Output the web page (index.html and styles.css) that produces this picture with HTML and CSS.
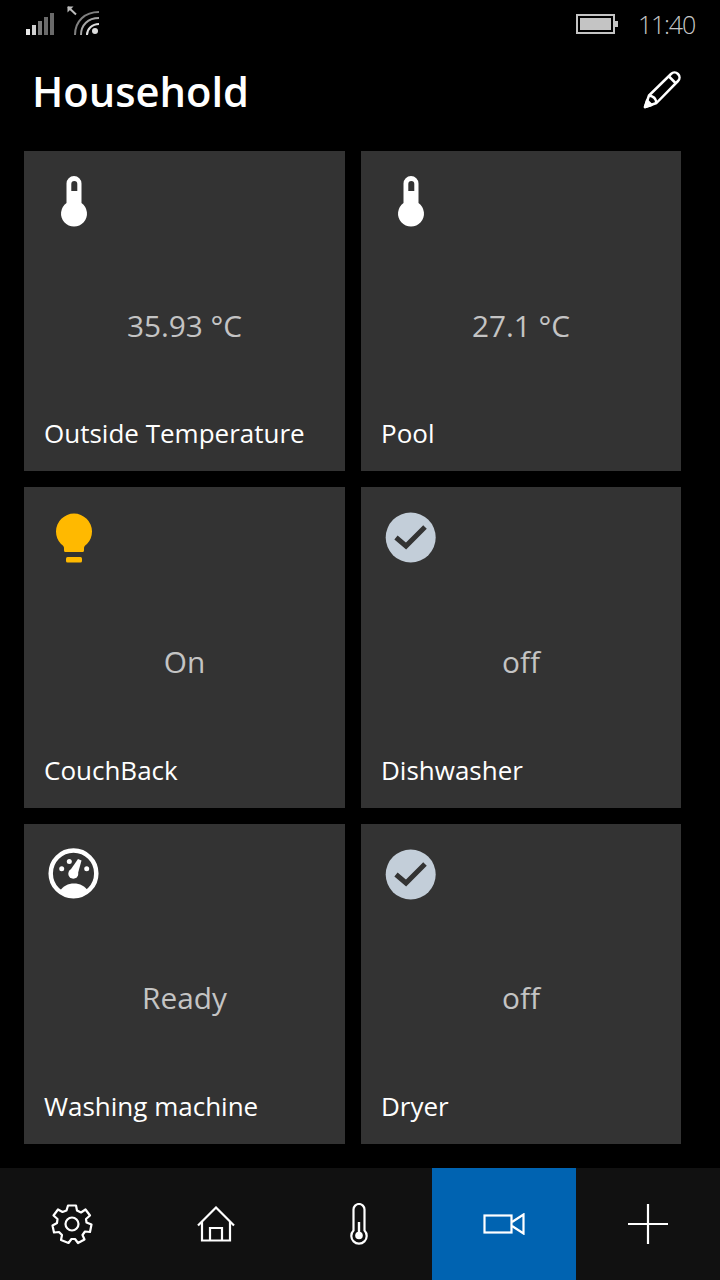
FILE: index.html
```html
<!DOCTYPE html>
<html lang="en">
<head>
    <meta charset="UTF-8">
    <meta name="viewport" content="width=device-width, initial-scale=1.0">
    <title>Household</title>
    <link rel="stylesheet" href="styles.css">
</head>
<body>
    <div class="phone">
        <div class="status-bar">
            <svg class="status-signal" width="30" height="24" viewBox="0 0 30 24">
                <rect x="0" y="17" width="4" height="6" fill="#e8e8e8"/>
                <rect x="6" y="13" width="4" height="10" fill="#d0d0d0"/>
                <rect x="12" y="9" width="4" height="14" fill="#7a7a7a"/>
                <rect x="18" y="5" width="4" height="18" fill="#6a6a6a"/>
                <rect x="24" y="1" width="4" height="22" fill="#6a6a6a"/>
            </svg>
            <svg class="status-wifi" width="36" height="30" viewBox="0 0 36 30" fill="none">
                <path d="M2 1L10 8.500" stroke="#bdbdbd" stroke-width="2"/>
                <path d="M1.500 6.500V.500H7.500Z" fill="#bdbdbd"/>
                <path d="M9 29C9 15 19 6 33 6" stroke="#808080" stroke-width="2"/>
                <path d="M15 29C15 19 22 12 33 12" stroke="#a5a5a5" stroke-width="2"/>
                <path d="M21 29C21 23 26 18 33 18" stroke="#ddd" stroke-width="2"/>
                <circle cx="29" cy="25" r="3" fill="#ddd"/>
            </svg>
            <span class="status-spacer"></span>
            <svg class="status-battery" width="44" height="20" viewBox="0 0 44 20">
                <rect x="1" y="1" width="37" height="18" fill="none" stroke="#c4c4c4" stroke-width="2"/>
                <rect x="4" y="4" width="31" height="12" fill="#c4c4c4"/>
                <rect x="39" y="7" width="3" height="6" fill="#c4c4c4"/>
            </svg>
            <span class="status-time">11:40</span>
        </div>

        <div class="header">
            <h1>Household</h1>
            <svg class="edit-icon" width="38" height="38" viewBox="0 0 38 38" fill="none" stroke="#fff" stroke-width="2.500" stroke-linejoin="round">
                <path d="M2 36L6 24.500 28 3C30 1 33 1 35 3S37 8 35 10L13.500 32Z"/>
                <path d="M6 24.500C10 25 13 28 13.500 32"/>
                <path d="M26 5.500L32.500 12"/>
                <path d="M2 36l6.500-2-4.500-4.500Z" fill="#fff"/>
            </svg>
        </div>

        <div class="tiles">
            <div class="tile">
                <svg class="tile-icon" width="60" height="60" viewBox="0 0 60 60">
                    <path class="fill-white" fill-rule="evenodd" d="M18.500 28V8.500a7.500 7.500 0 0 1 15 0V28a13 13 0 1 1-15 0ZM23.300 16h6V9a3 3 0 0 0-6 0Z"/>
                </svg>
                <div class="tile-value">35.93 °C</div>
                <div class="tile-name">Outside Temperature</div>
            </div>
            <div class="tile">
                <svg class="tile-icon" width="60" height="60" viewBox="0 0 60 60">
                    <path class="fill-white" fill-rule="evenodd" d="M18.500 28V8.500a7.500 7.500 0 0 1 15 0V28a13 13 0 1 1-15 0ZM23.300 16h6V9a3 3 0 0 0-6 0Z"/>
                </svg>
                <div class="tile-value">27.1 °C</div>
                <div class="tile-name">Pool</div>
            </div>
            <div class="tile">
                <svg class="tile-icon" width="60" height="60" viewBox="0 0 60 60">
                    <path class="fill-amber" d="M16 39.500V37c0-1.500-1-2.500-3-4a18 18 0 1 1 26 0c-2 1.500-3 2.500-3 4v2.500a1.500 1.500 0 0 1-1.500 1.500h-17A1.500 1.500 0 0 1 16 39.500Z"/>
                    <rect class="fill-amber" x="18" y="46" width="16" height="5.500" rx="1.500"/>
                </svg>
                <div class="tile-value">On</div>
                <div class="tile-name">CouchBack</div>
            </div>
            <div class="tile">
                <svg class="tile-icon" width="60" height="60" viewBox="0 0 60 60">
                    <circle class="fill-check" cx="25.700" cy="26.500" r="25"/>
                    <path class="check-mark" d="M11 26.500L21 35 40 16"/>
                </svg>
                <div class="tile-value">off</div>
                <div class="tile-name">Dishwasher</div>
            </div>
            <div class="tile">
                <svg class="tile-icon" width="60" height="60" viewBox="0 0 60 60">
                    <circle cx="25.500" cy="25.400" r="22.800" fill="none" stroke="#fff" stroke-width="4.500"/>
                    <path class="fill-white" d="M12 43C15 38 20 35.400 26 35.400S37 38 40 43C36 46.500 31 48 26 48S16 46.500 12 43Z"/>
                    <circle class="fill-white" cx="25.300" cy="25.700" r="5"/>
                    <path class="fill-white" d="M21 24L30 11 33.500 12.500 29.500 27Z"/>
                    <circle class="fill-white" cx="13.700" cy="20.700" r="2.500"/>
                    <circle class="fill-white" cx="21.300" cy="13.400" r="2.500"/>
                    <circle class="fill-white" cx="38.700" cy="20.700" r="2.500"/>
                </svg>
                <div class="tile-value">Ready</div>
                <div class="tile-name">Washing machine</div>
            </div>
            <div class="tile">
                <svg class="tile-icon" width="60" height="60" viewBox="0 0 60 60">
                    <circle class="fill-check" cx="25.700" cy="26.500" r="25"/>
                    <path class="check-mark" d="M11 26.500L21 35 40 16"/>
                </svg>
                <div class="tile-value">off</div>
                <div class="tile-name">Dryer</div>
            </div>
        </div>

        <div class="nav-bar">
            <div class="nav-item">
                <svg width="42" height="42" viewBox="0 0 42 42" fill="none" stroke="#fff" stroke-width="2.200" stroke-linejoin="round">
                    <path d="M17 2.500L25 2.500 26 7.500 30 9.500 34.500 6.500 39 12.500 35 16 35.500 19.500 40.500 21.500 39 29 34 28.500 31.500 32 33.500 36.500 27 40 24 36 20.500 36 17.500 40 10 37 11 32 8 29 3 29.500 1.500 22.500 6 20 6.500 16 2.500 12.500 7 6.500 11.500 9 15.500 7.500Z"/>
                    <circle cx="21" cy="21" r="6.500"/>
                </svg>
            </div>
            <div class="nav-item">
                <svg width="38" height="36" viewBox="0 0 38 36" fill="none" stroke="#fff" stroke-width="2.200">
                    <path d="M1 19.500L19 1.500 37 19.500"/>
                    <path d="M5 16V34.500H33V16"/>
                    <path d="M13 34.500V22H25V34.500"/>
                </svg>
            </div>
            <div class="nav-item">
                <svg class="nav-thermo" width="18" height="42" viewBox="0 0 18 42" fill="none" stroke="#fff" stroke-width="2.200">
                    <path d="M3.500 27.500V6.500a5.500 5.500 0 0 1 11 0v21a7.700 7.700 0 1 1-11 0Z"/>
                    <path d="M9 19V32" stroke-width="2.400"/>
                    <circle cx="9" cy="32.500" r="3.800" fill="#fff" stroke="none"/>
                </svg>
            </div>
            <div class="nav-item active">
                <svg width="42" height="22" viewBox="0 0 42 22" fill="none" stroke="#fff" stroke-width="2.200">
                    <rect x="1.500" y="2.500" width="27" height="17"/>
                    <path d="M29 9L40.500 1.500V20.500L29 13"/>
                </svg>
            </div>
            <div class="nav-item">
                <svg width="40" height="40" viewBox="0 0 40 40" fill="none" stroke="#fff" stroke-width="2.200">
                    <path d="M20 0V40M0 20H40"/>
                </svg>
            </div>
        </div>
    </div>
</body>
</html>
```

FILE: styles.css
```css
body {
    margin: 0;
    padding: 0;
    background-color: #000;
    color: #fff;
    font-family: "Open Sans", "Liberation Sans", sans-serif;
    overflow: hidden;
}
.phone {
    width: 720px;
    height: 1280px;
    display: flex;
    flex-direction: column;
}
.status-bar {
    height: 48px;
    display: flex;
    align-items: center;
    padding-left: 26px;
    padding-right: 25px;
    box-sizing: border-box;
}
.status-wifi {
    margin-left: 10px;
    margin-top: -6px;
}
.status-spacer {
    flex: 1;
}
.status-battery {
    margin-right: 18px;
}
.status-time {
    font-size: 25px;
    font-weight: 300;
    color: #c8c8c8;
    letter-spacing: -1.200px;
}
.header {
    height: 103px;
    display: flex;
    align-items: flex-start;
    justify-content: space-between;
    padding-left: 32px;
    padding-right: 39px;
}
h1 {
    margin: 13px 0 0;
    font-size: 41.700px;
    font-weight: 600;
    line-height: 60px;
}
.edit-icon {
    margin-top: 23px;
}
.tiles {
    display: grid;
    grid-template-columns: 321px 320px;
    grid-auto-rows: 320.300px;
    gap: 16px;
    padding-left: 24px;
}
.tile {
    background-color: #333;
    display: flex;
    flex-direction: column;
    padding: 24px 20px 20px;
    box-sizing: border-box;
}
.tile-icon {
    flex-shrink: 0;
    margin-left: 4px;
}
.tile-value {
    flex: 1;
    display: flex;
    align-items: center;
    justify-content: center;
    font-size: 29.800px;
    color: #c4c4c4;
}
.tile-name {
    font-size: 26px;
    line-height: 36px;
    white-space: nowrap;
}
.fill-white {
    fill: #fff;
}
.fill-amber {
    fill: #ffb900;
}
.fill-check {
    fill: #c3ced9;
}
.check-mark {
    fill: none;
    stroke: #333;
    stroke-width: 5;
}
.nav-bar {
    height: 112px;
    margin-top: auto;
    background-color: #111;
    display: grid;
    grid-template-columns: repeat(5, 144px);
    flex-shrink: 0;
}
.nav-item {
    display: flex;
    align-items: center;
    justify-content: center;
}
.nav-item.active {
    background-color: #0063b1;
}
.nav-thermo {
    margin-right: 2px;
}
```
